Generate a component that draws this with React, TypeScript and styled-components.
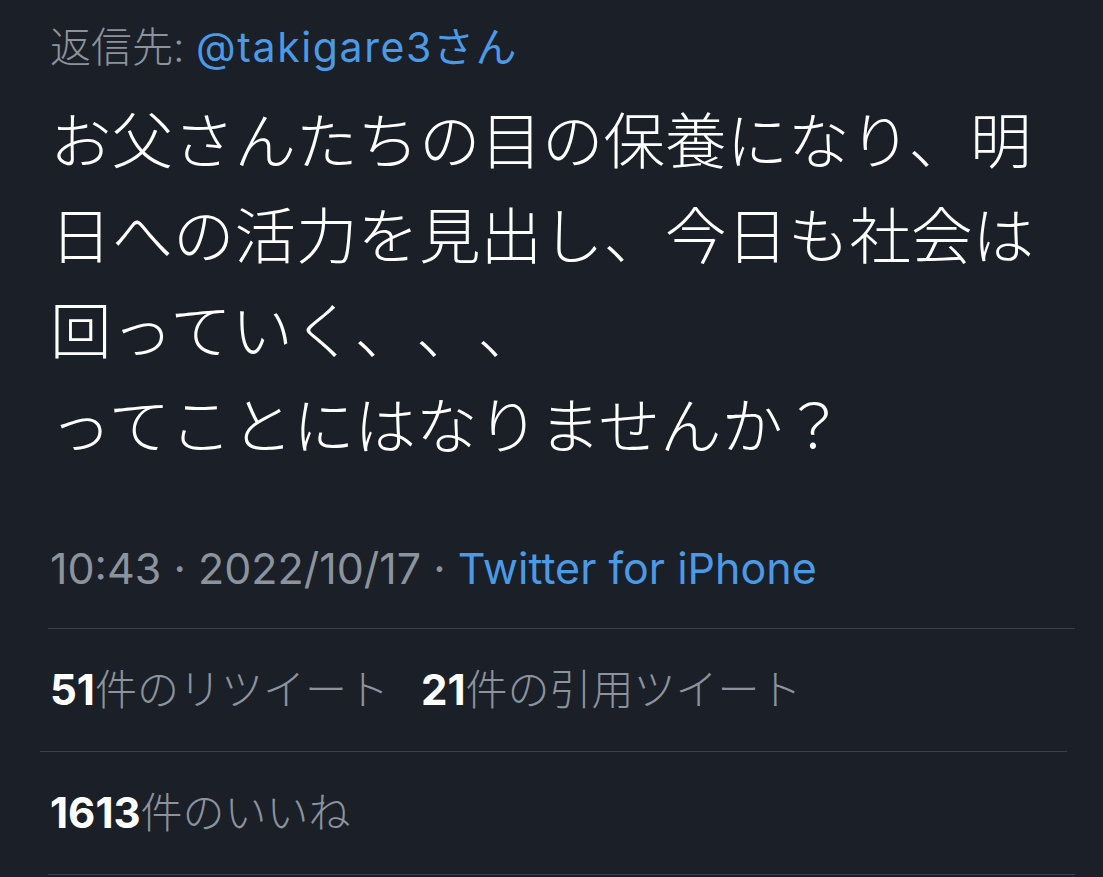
import React from "react";
import styled, { createGlobalStyle } from "styled-components";

const GlobalStyle = createGlobalStyle`
  body {
    margin: 0;
    background-color: #1b1f28;
    font-family: Inter, "Noto Sans CJK JP", sans-serif;
  }
`;

const Page = styled.div`
  width: 1103px;
  height: 877px;
  overflow: hidden;
  background-color: #1b1f28;
`;

const ReplyTo = styled.div`
  padding: 22px 0 0 50px;
  font-size: 41px;
  line-height: 50px;
  color: #8b939c;
  font-weight: 300;
`;

const Link = styled.span<{ $wide?: boolean }>`
  color: #4a9ae6;
  font-weight: 400;
  letter-spacing: ${(p) => (p.$wide ? "1.6px" : "0")};
`;

const Body = styled.p`
  margin: 18px 0 0 50px;
  font-family: "Noto Sans CJK JP", sans-serif;
  font-size: 61.5px;
  line-height: 95px;
  font-weight: 300;
  color: #ffffff;
  text-spacing-trim: space-all;
`;

const Meta = styled.div`
  margin: 73px 0 0 50px;
  font-size: 43px;
  line-height: 50px;
  color: #8b939c;
  font-weight: 400;
`;

const Divider = styled.div<{ $shift?: number }>`
  height: 1px;
  width: 1027px;
  margin-left: ${(p) => 48 + (p.$shift ?? 0)}px;
  background-color: #3b4049;
`;

const StatRow = styled.div`
  height: 122px;
  box-sizing: border-box;
  padding: 0 0 8px 50px;
  display: flex;
  align-items: center;
  gap: 32px;
  font-size: 42px;
  color: #8b939c;
`;

const Stat = styled.span`
  font-weight: 300;
`;

const Num = styled.b`
  color: #ffffff;
  font-weight: 700;
`;

export default function App() {
  return (
    <Page>
      <GlobalStyle />
      <ReplyTo>
        返信先: <Link $wide>@takigare3さん</Link>
      </ReplyTo>
      <Body>
        お父さんたちの目の保養になり、明
        <br />
        日への活力を見出し、今日も社会は
        <br />
        回っていく、、、
        <br />
        ってことにはなりませんか？
      </Body>
      <Meta>
        10:43 · 2022/10/17 · <Link>Twitter for iPhone</Link>
      </Meta>
      <div style={{ height: 35 }} />
      <Divider />
      <StatRow>
        <Stat>
          <Num>51</Num>件のリツイート
        </Stat>
        <Stat>
          <Num>21</Num>件の引用ツイート
        </Stat>
      </StatRow>
      <Divider $shift={-8} />
      <StatRow>
        <Stat>
          <Num>1613</Num>件のいいね
        </Stat>
      </StatRow>
      <Divider />
    </Page>
  );
}
